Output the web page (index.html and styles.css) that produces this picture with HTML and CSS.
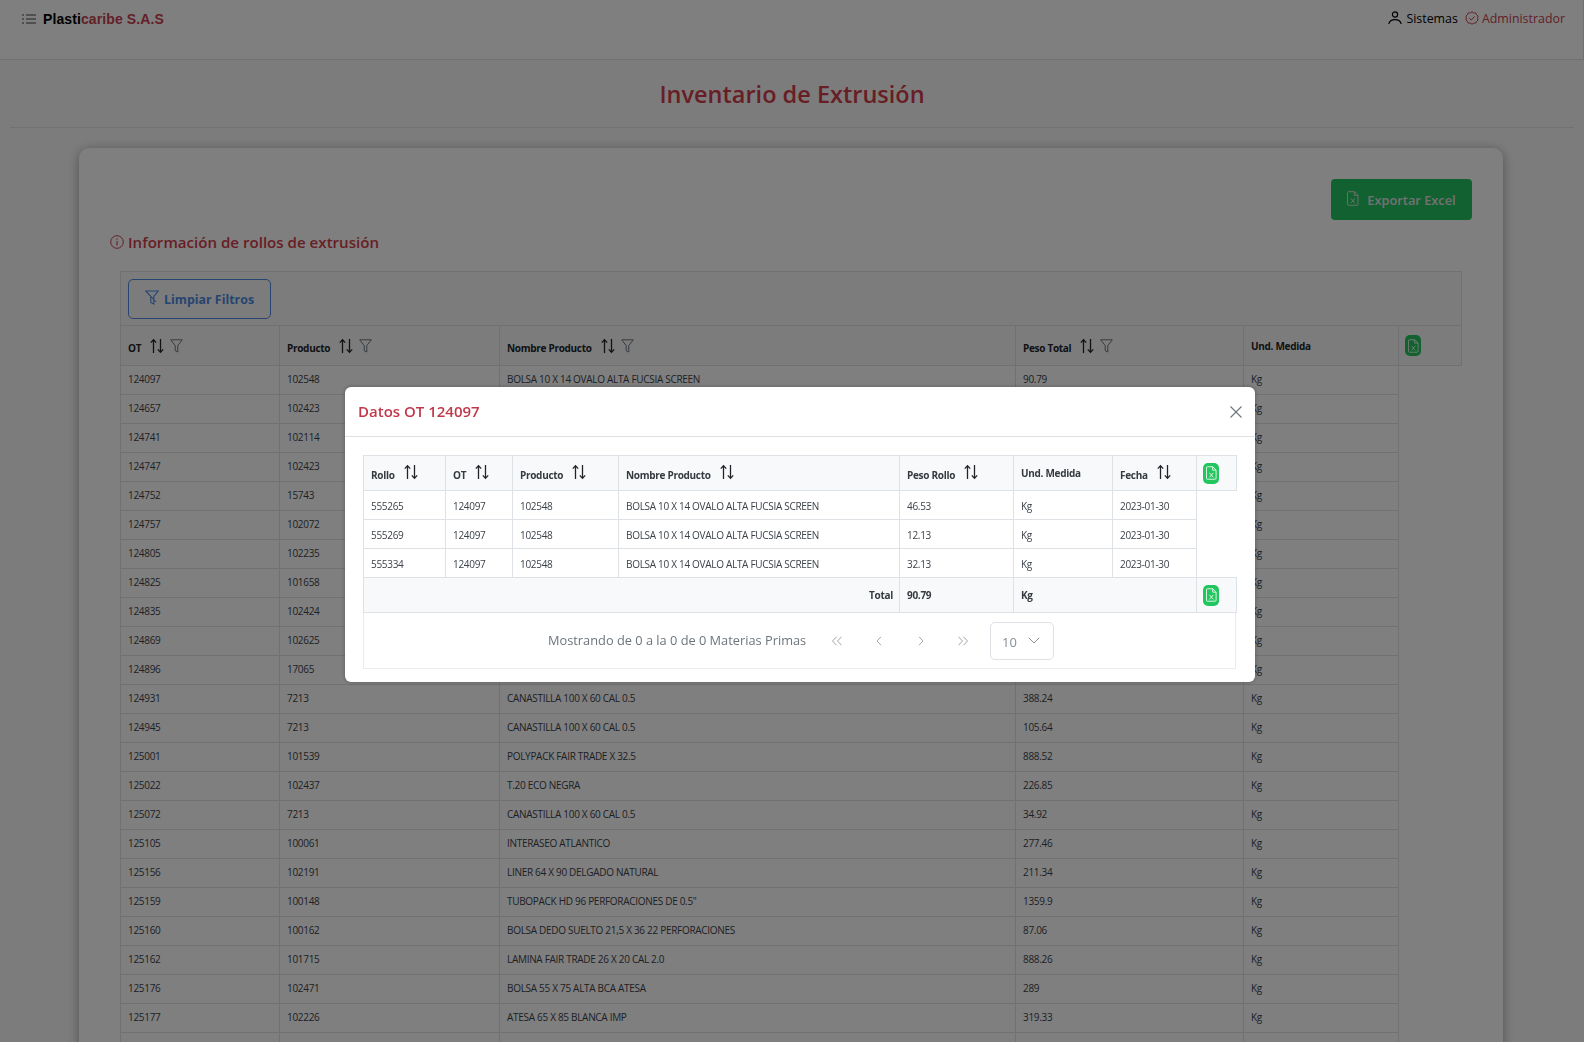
FILE: index.html
```html
<!DOCTYPE html>
<html lang="es">
<head>
    <meta charset="UTF-8">
    <meta name="viewport" content="width=device-width, initial-scale=1.0">
    <title>Inventario de Extrusión</title>
    <link rel="stylesheet" href="styles.css">
</head>
<body>
    <svg class="icon-defs" width="0" height="0">
        <symbol id="i-sort" viewBox="0 0 14 16">
            <path d="M3.5 15V2M.8 4.6 3.5 1.6l2.7 3M10.5 1v13M7.8 11.400l2.700 3 2.700-3" fill="none" stroke="currentColor" stroke-width="1.3"/>
        </symbol>
        <symbol id="i-filter" viewBox="0 0 13 14">
            <path d="M.7.8h11.600L7.800 6.600v6.400l-2.600-1.300V6.600z" fill="none" stroke="currentColor" stroke-width="1"/>
        </symbol>
        <symbol id="i-excel" viewBox="0 0 12 15">
            <path d="M1.500.7h6l3.500 3.500v9.100a1 1 0 0 1-1 1H1.500a1 1 0 0 1-1-1V1.700a1 1 0 0 1 1-1zM7.300.8v3.600h3.600M3.800 7.300l4.200 5M8 7.300l-4.200 5" fill="none" stroke="currentColor" stroke-width=".9"/>
        </symbol>
    </svg>

    <nav class="navbar">
        <div class="brand">
            <svg class="list-icon" viewBox="0 0 14 10"><path d="M4 1h10M4 5h10M4 9h10M0 1h2M0 5h2M0 9h2" fill="none" stroke="currentColor" stroke-width="1"/></svg>
            <span class="brand-name">Plasti<span class="brand-red">caribe S.A.S</span></span>
        </div>
        <div class="user">
            <svg class="user-icon" viewBox="0 0 14 14"><circle cx="7" cy="3.500" r="2.600" fill="none" stroke="currentColor" stroke-width="1.200"/><path d="M.8 13c.6-3 3-4.300 6.200-4.300s5.600 1.300 6.200 4.300" fill="none" stroke="currentColor" stroke-width="1.200"/></svg>
            <span>Sistemas</span>
            <svg class="role-icon" viewBox="0 0 14 14"><path d="M7 .8l1.700 1.100 2 .1 1 1.800 1.400 1.400-.5 1.900.5 1.900-1.400 1.300-1 1.800-2 .1L7 13.200l-1.700-1-2-.1-1-1.800L.9 9l.5-1.900L.9 5.200l1.400-1.400 1-1.800 2-.1z" fill="none" stroke="currentColor" stroke-width="1"/><path d="M4.300 7.200 6.300 9l3.400-3.600" fill="none" stroke="currentColor" stroke-width="1"/></svg>
            <span class="role">Administrador</span>
        </div>
    </nav>

    <h1 class="page-title">Inventario de Extrusión</h1>
    <hr class="title-rule">

    <main class="card">
        <div class="card-actions">
            <button class="btn-export"><svg class="export-icon"><use href="#i-excel"/></svg>Exportar Excel</button>
        </div>
        <h2 class="section-title">
            <svg class="info-icon" viewBox="0 0 14 14"><circle cx="7" cy="7" r="6.300" fill="none" stroke="currentColor" stroke-width="1"/><path d="M7 6v4.500M7 3.500v1.200" fill="none" stroke="currentColor" stroke-width="1.100"/></svg>
            Información de rollos de extrusión
        </h2>

        <div class="toolbar">
            <button class="btn-clear">
                <svg class="clear-icon" viewBox="0 0 14 15"><path d="M.8 1h12.400L8.800 6.500v7.500l-3-1.500V6.500zM1 1l10 11M3.500 1h8" fill="none" stroke="currentColor" stroke-width="1.100"/></svg>
                Limpiar Filtros
            </button>
        </div>

        <table class="data-table rollos">
            <thead>
                <tr>
                    <th class="c-ot"><span class="th-label">OT</span><svg class="sort"><use href="#i-sort"/></svg><svg class="filter"><use href="#i-filter"/></svg></th>
                    <th class="c-prod"><span class="th-label">Producto</span><svg class="sort"><use href="#i-sort"/></svg><svg class="filter"><use href="#i-filter"/></svg></th>
                    <th class="c-name"><span class="th-label">Nombre Producto</span><svg class="sort"><use href="#i-sort"/></svg><svg class="filter"><use href="#i-filter"/></svg></th>
                    <th class="c-peso"><span class="th-label">Peso Total</span><svg class="sort"><use href="#i-sort"/></svg><svg class="filter"><use href="#i-filter"/></svg></th>
                    <th class="c-und">Und. Medida</th>
                    <th class="c-act"><span class="btn-xls"><svg><use href="#i-excel"/></svg></span></th>
                </tr>
            </thead>
            <tbody>
                <tr><td>124097</td><td>102548</td><td>BOLSA 10 X 14 OVALO ALTA FUCSIA SCREEN</td><td>90.79</td><td>Kg</td></tr>
                <tr><td>124657</td><td>102423</td><td></td><td></td><td>Kg</td></tr>
                <tr><td>124741</td><td>102114</td><td></td><td></td><td>Kg</td></tr>
                <tr><td>124747</td><td>102423</td><td></td><td></td><td>Kg</td></tr>
                <tr><td>124752</td><td>15743</td><td></td><td></td><td>Kg</td></tr>
                <tr><td>124757</td><td>102072</td><td></td><td></td><td>Kg</td></tr>
                <tr><td>124805</td><td>102235</td><td></td><td></td><td>Kg</td></tr>
                <tr><td>124825</td><td>101658</td><td></td><td></td><td>Kg</td></tr>
                <tr><td>124835</td><td>102424</td><td></td><td></td><td>Kg</td></tr>
                <tr><td>124869</td><td>102625</td><td></td><td></td><td>Kg</td></tr>
                <tr><td>124896</td><td>17065</td><td></td><td></td><td>Kg</td></tr>
                <tr><td>124931</td><td>7213</td><td>CANASTILLA 100 X 60 CAL 0.5</td><td>388.24</td><td>Kg</td></tr>
                <tr><td>124945</td><td>7213</td><td>CANASTILLA 100 X 60 CAL 0.5</td><td>105.64</td><td>Kg</td></tr>
                <tr><td>125001</td><td>101539</td><td>POLYPACK FAIR TRADE X 32.5</td><td>888.52</td><td>Kg</td></tr>
                <tr><td>125022</td><td>102437</td><td>T.20 ECO NEGRA</td><td>226.85</td><td>Kg</td></tr>
                <tr><td>125072</td><td>7213</td><td>CANASTILLA 100 X 60 CAL 0.5</td><td>34.92</td><td>Kg</td></tr>
                <tr><td>125105</td><td>100061</td><td>INTERASEO ATLANTICO</td><td>277.46</td><td>Kg</td></tr>
                <tr><td>125156</td><td>102191</td><td>LINER 64 X 90 DELGADO NATURAL</td><td>211.34</td><td>Kg</td></tr>
                <tr><td>125159</td><td>100148</td><td>TUBOPACK HD 96 PERFORACIONES DE 0.5"</td><td>1359.9</td><td>Kg</td></tr>
                <tr><td>125160</td><td>100162</td><td>BOLSA DEDO SUELTO 21,5 X 36 22 PERFORACIONES</td><td>87.06</td><td>Kg</td></tr>
                <tr><td>125162</td><td>101715</td><td>LAMINA FAIR TRADE 26 X 20 CAL 2.0</td><td>888.26</td><td>Kg</td></tr>
                <tr><td>125176</td><td>102471</td><td>BOLSA 55 X 75 ALTA BCA ATESA</td><td>289</td><td>Kg</td></tr>
                <tr><td>125177</td><td>102226</td><td>ATESA 65 X 85 BLANCA IMP</td><td>319.33</td><td>Kg</td></tr>
                <tr><td></td><td></td><td></td><td></td><td></td></tr>
            </tbody>
        </table>
    </main>

    <div class="modal-mask">
        <div class="modal">
            <header class="modal-header">
                <span class="modal-title">Datos OT 124097</span>
                <svg class="modal-close" viewBox="0 0 12 12"><path d="M.5.5l11 11M11.500.5l-11 11" fill="none" stroke="currentColor" stroke-width="1.100"/></svg>
            </header>
            <div class="modal-body">
                <table class="data-table detalle">
                    <thead>
                        <tr>
                            <th class="d-rollo"><span class="th-label">Rollo</span><svg class="sort"><use href="#i-sort"/></svg></th>
                            <th class="d-ot"><span class="th-label">OT</span><svg class="sort"><use href="#i-sort"/></svg></th>
                            <th class="d-prod"><span class="th-label">Producto</span><svg class="sort"><use href="#i-sort"/></svg></th>
                            <th class="d-name"><span class="th-label">Nombre Producto</span><svg class="sort"><use href="#i-sort"/></svg></th>
                            <th class="d-peso"><span class="th-label">Peso Rollo</span><svg class="sort"><use href="#i-sort"/></svg></th>
                            <th class="d-und">Und. Medida</th>
                            <th class="d-fecha"><span class="th-label">Fecha</span><svg class="sort"><use href="#i-sort"/></svg></th>
                            <th class="d-act"><span class="btn-xls"><svg><use href="#i-excel"/></svg></span></th>
                        </tr>
                    </thead>
                    <tbody>
                        <tr><td>555265</td><td>124097</td><td>102548</td><td>BOLSA 10 X 14 OVALO ALTA FUCSIA SCREEN</td><td>46.53</td><td>Kg</td><td>2023-01-30</td></tr>
                        <tr><td>555269</td><td>124097</td><td>102548</td><td>BOLSA 10 X 14 OVALO ALTA FUCSIA SCREEN</td><td>12.13</td><td>Kg</td><td>2023-01-30</td></tr>
                        <tr><td>555334</td><td>124097</td><td>102548</td><td>BOLSA 10 X 14 OVALO ALTA FUCSIA SCREEN</td><td>32.13</td><td>Kg</td><td>2023-01-30</td></tr>
                    </tbody>
                    <tfoot>
                        <tr>
                            <th colspan="4" class="total-label">Total</th>
                            <th>90.79</th>
                            <th colspan="2">Kg</th>
                            <th><span class="btn-xls"><svg><use href="#i-excel"/></svg></span></th>
                        </tr>
                    </tfoot>
                </table>
                <div class="paginator">
                    <span class="page-report">Mostrando de 0 a la 0 de 0 Materias Primas</span>
                    <svg class="page-btn" viewBox="0 0 12 10"><path d="M5.500.8 1.500 5l4 4.200M10.500.8 6.500 5l4 4.200" fill="none" stroke="currentColor"/></svg>
                    <svg class="page-btn" viewBox="0 0 12 10"><path d="M8 .8 4 5l4 4.200" fill="none" stroke="currentColor"/></svg>
                    <svg class="page-btn" viewBox="0 0 12 10"><path d="M4 .8 8 5 4 9.200" fill="none" stroke="currentColor"/></svg>
                    <svg class="page-btn" viewBox="0 0 12 10"><path d="M1.500.8l4 4.200-4 4.200M6.500.8l4 4.200-4 4.200" fill="none" stroke="currentColor"/></svg>
                    <div class="page-size">
                        <span>10</span>
                        <svg viewBox="0 0 12 7"><path d="M.8.800 6 6l5.200-5.200" fill="none" stroke="currentColor"/></svg>
                    </div>
                </div>
            </div>
        </div>
    </div>
</body>
</html>
```

FILE: styles.css
```css
html, body {
    height: 100%;
    overflow: hidden;
}

body {
    margin: 0;
    font-family: "Open Sans", "Noto Sans", sans-serif;
    background-color: #f9f9f9;
    color: #212529;
}

.icon-defs {
    position: absolute;
}

.navbar {
    height: 60px;
    box-sizing: border-box;
    padding: 6px 18px 0 22px;
    display: flex;
    justify-content: space-between;
    align-items: flex-start;
    background-color: #fff;
    border-right: 1px solid #dee2e6;
    border-bottom: 1px solid #dee2e6;
}

.brand {
    display: flex;
    align-items: center;
    height: 26px;
}

.list-icon {
    width: 14px;
    height: 10px;
    color: #444;
    margin-right: 7px;
}

.brand-name {
    font-family: "Liberation Sans", Arial, sans-serif;
    font-weight: bold;
    font-size: 14px;
    letter-spacing: .1px;
    color: #000;
}

.brand-red {
    color: #c8404f;
}

.user {
    display: flex;
    align-items: center;
    height: 24px;
    font-size: 12.400px;
    color: #000;
}

.user-icon {
    width: 14px;
    height: 14px;
    margin-right: 4px;
}

.role-icon {
    width: 14px;
    height: 14px;
    margin: 0 3px 0 7px;
    color: #c8404f;
}

.role {
    color: #c8404f;
}

.page-title {
    margin: 15px 0 0;
    font-size: 23.500px;
    line-height: 38px;
    font-weight: 600;
    text-align: center;
    color: #d03c4a;
}

.title-rule {
    margin: 14px 10px 0;
    border: none;
    border-top: 1px solid #e4e4e4;
}

.card {
    margin: 20px 81px 0 79px;
    padding: 31px 41px 0;
    background-color: #fff;
    border-radius: 10px;
    box-shadow: 0 2px 12px rgba(0, 0, 0, 0.35);
}

.card-actions {
    display: flex;
    justify-content: flex-end;
    margin-right: -10px;
}

.btn-export {
    width: 141px;
    height: 41px;
    display: flex;
    align-items: center;
    justify-content: center;
    border: none;
    border-radius: 4px;
    background-color: #25c262;
    color: #e4e4e4;
    font-family: inherit;
    font-size: 12.800px;
    font-weight: 600;
}

.export-icon {
    width: 12px;
    height: 15px;
    margin: -3px 8px 0 0;
}

.section-title {
    margin: 10px 0 0 -10px;
    height: 24px;
    display: flex;
    align-items: center;
    gap: 4px;
    font-size: 15.100px;
    line-height: 24px;
    font-weight: 600;
    color: #d03c4a;
}

.info-icon {
    width: 14px;
    height: 14px;
}

.toolbar {
    margin-top: 17px;
    width: 1342px;
    height: 54px;
    box-sizing: border-box;
    padding: 7px;
    background-color: #f8f9fa;
    border: 1px solid #dee2e6;
    border-bottom: none;
}

.btn-clear {
    width: 143px;
    height: 40px;
    display: flex;
    align-items: center;
    justify-content: center;
    gap: 5px;
    background: none;
    border: 1px solid #4f8ae0;
    border-radius: 5px;
    color: #4f8ae0;
    font-family: inherit;
    font-size: 12.400px;
    font-weight: 700;
}

.clear-icon {
    width: 14px;
    height: 15px;
    margin-top: -4px;
}

.data-table {
    table-layout: fixed;
    border-collapse: collapse;
    font-size: 10px;
    letter-spacing: -.3px;
}

.data-table th, .data-table td {
    box-sizing: border-box;
    border: 1px solid #dee2e6;
    padding: 0 7px;
    text-align: left;
    white-space: nowrap;
    overflow: hidden;
}

.data-table th {
    background-color: #f8f9fa;
    font-weight: 700;
}

.data-table td {
    font-weight: 400;
    color: #3c4249;
}

.rollos {
    width: 1341px;
}

.rollos thead tr {
    height: 40px;
}

.rollos tbody tr {
    height: 29px;
}

.rollos td {
    padding-bottom: 2px;
}

.c-ot { width: 159px; }
.c-prod { width: 220px; }
.c-name { width: 516px; }
.c-peso { width: 228px; }
.c-und { width: 155px; }
.c-act { width: 63px; }

.th-label {
    display: inline-block;
    vertical-align: middle;
    margin-top: 4px;
}

.sort {
    width: 14px;
    height: 16px;
    margin-left: 9px;
    vertical-align: middle;
    color: #212529;
}

.filter {
    width: 13px;
    height: 14px;
    margin-left: 6px;
    vertical-align: middle;
    color: #6c757d;
}

.btn-xls {
    display: inline-flex;
    align-items: center;
    justify-content: center;
    width: 16px;
    height: 21px;
    margin-left: -1px;
    vertical-align: middle;
    background-color: #22c55e;
    border-radius: 5px;
    color: #fff;
}

.btn-xls svg {
    width: 11px;
    height: 14px;
}

.modal-mask {
    position: fixed;
    inset: 0;
    background-color: rgba(0, 0, 0, 0.5);
}

.modal {
    position: absolute;
    left: 345px;
    top: 387px;
    width: 910px;
    height: 295px;
    background-color: #fff;
    border-radius: 6px;
    box-shadow: 0 0 4px rgba(0, 0, 0, 0.3);
}

.modal-header {
    height: 50px;
    box-sizing: border-box;
    padding: 0 13px;
    display: flex;
    justify-content: space-between;
    align-items: center;
    border-bottom: 1px solid #dee2e6;
}

.modal-title {
    font-size: 15px;
    font-weight: 600;
    margin-top: -2px;
    color: #c0394b;
}

.modal-close {
    width: 12px;
    height: 12px;
    color: #6c757d;
}

.modal-body {
    padding: 18px 18px 0;
}

.detalle {
    width: 873px;
}

.detalle thead tr { height: 35px; }
.detalle tbody tr { height: 29px; }
.detalle tfoot tr { height: 35px; }

.detalle th { color: #343a40; }

.detalle tbody td {
    padding-top: 1px;
}

.detalle .sort {
    margin-top: -2px;
}

.d-rollo { width: 82px; }
.d-ot { width: 67px; }
.d-prod { width: 106px; }
.d-name { width: 281px; }
.d-peso { width: 114px; }
.d-und { width: 99px; }
.d-fecha { width: 84px; }
.d-act { width: 40px; }

.detalle .total-label {
    text-align: right;
    padding-right: 6px;
}

.paginator {
    width: 873px;
    height: 56px;
    box-sizing: border-box;
    padding-left: 184px;
    display: flex;
    align-items: center;
    border: 1px solid #e9ecef;
    border-top: none;
    color: #6c757d;
}

.page-report {
    width: 283px;
    margin-top: -2px;
    white-space: nowrap;
    font-size: 12.800px;
}

.page-btn {
    width: 12px;
    height: 10px;
    margin-right: 30px;
    color: #a0a6ac;
}

.page-size {
    width: 64px;
    height: 38px;
    box-sizing: border-box;
    margin-left: -9px;
    padding: 2px 13px 0 11px;
    display: flex;
    justify-content: space-between;
    align-items: center;
    border: 1px solid #dee2e6;
    border-radius: 5px;
    font-size: 13px;
    color: #868e96;
}

.page-size svg {
    width: 12px;
    height: 7px;
    margin-top: -3px;
}
```
